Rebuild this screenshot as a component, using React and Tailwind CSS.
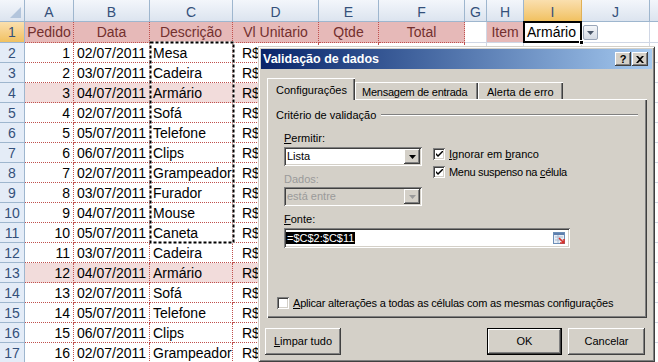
import React from 'react'

const cols = [
  { k: 'A', w: 'w-[49px]' },
  { k: 'B', w: 'w-[76px]' },
  { k: 'C', w: 'w-[83px]' },
  { k: 'D', w: 'w-[86px]' },
  { k: 'E', w: 'w-[60px]' },
  { k: 'F', w: 'w-[86px]' },
  { k: 'G', w: 'w-[22px]' },
  { k: 'H', w: 'w-[37px]' },
  { k: 'I', w: 'w-[58px]' },
  { k: 'J', w: 'w-[68px]' },
  { k: '', w: 'w-[70px]' },
]

const pedidos = [
  ['1', '02/07/2011', 'Mesa'],
  ['2', '03/07/2011', 'Cadeira'],
  ['3', '04/07/2011', 'Armário'],
  ['4', '02/07/2011', 'Sofá'],
  ['5', '05/07/2011', 'Telefone'],
  ['6', '06/07/2011', 'Clips'],
  ['7', '02/07/2011', 'Grampeador'],
  ['8', '03/07/2011', 'Furador'],
  ['9', '04/07/2011', 'Mouse'],
  ['10', '05/07/2011', 'Caneta'],
  ['11', '03/07/2011', 'Cadeira'],
  ['12', '04/07/2011', 'Armário'],
  ['13', '02/07/2011', 'Sofá'],
  ['14', '05/07/2011', 'Telefone'],
  ['15', '06/07/2011', 'Clips'],
  ['16', '02/07/2011', 'Grampeador'],
]

const red = 'shrink-0 border-r border-b border-dotted border-[#c0504d]'
const grid = 'shrink-0 border-r border-b border-[#d0d7e5]'
const headBlue = 'bg-linear-to-b from-[#f3f6fb] to-[#dce4ef]'
const headOrange = 'bg-linear-to-b from-[#fadfae] to-[#f1c15f]'

// bordas 3d do windows clássico
const raised = 'shadow-[inset_-1px_-1px_#404040,inset_1px_1px_#ffffff,inset_-2px_-2px_#808080,inset_2px_2px_#d4d0c8]'
const sunken = 'shadow-[inset_1px_1px_#808080,inset_-1px_-1px_#ffffff,inset_2px_2px_#404040,inset_-2px_-2px_#d4d0c8]'

function RowHead({ n, active }) {
  return (
    <div className={`w-[25px] shrink-0 border-r border-b border-[#9eb6ce] text-center leading-[20px] text-[#34507a] ${active ? headOrange : 'bg-[#e4ecf7]'}`}>
      {n}
    </div>
  )
}

function DataRow({ n, r }) {
  const fill = r[2] === 'Armário' ? 'bg-[#f2dcdb]' : 'bg-white'
  return (
    <div className="flex h-[20px] leading-[20px]">
      <RowHead n={n} />
      <div className={`w-[49px] ${red} ${fill} text-right pr-[3px]`}>{r[0]}</div>
      <div className={`w-[76px] ${red} ${fill} text-right pr-[3px]`}>{r[1]}</div>
      <div className={`w-[83px] ${red} ${fill} pl-[3px]`}>{r[2]}</div>
      <div className={`w-[86px] ${red} ${fill} pl-[9px]`}>R$</div>
      <div className={`w-[60px] ${red} ${fill}`} />
      <div className={`w-[86px] ${red} ${fill}`} />
      <div className={`w-[22px] ${grid}`} />
      <div className={`w-[37px] ${grid}`} />
      <div className={`w-[58px] ${grid}`} />
      <div className={`w-[68px] ${grid}`} />
      <div className={`w-[70px] ${grid}`} />
    </div>
  )
}

function DropArrow({ color = '#000000' }) {
  return (
    <svg width="7" height="4" viewBox="0 0 7 4">
      <path d="M0 0h7L3.5 4z" fill={color} />
    </svg>
  )
}

function Check({ on }) {
  return (
    <div className={`w-[12px] h-[12px] shrink-0 bg-white ${sunken} flex items-center justify-center`}>
      {on && (
        <svg width="7" height="7" viewBox="0 0 7 7">
          <path d="M0 2v2l2 2 5-5V-1L2 4z" fill="#000" />
        </svg>
      )}
    </div>
  )
}

function Button({ children, def, className = '' }) {
  return (
    <div className={`h-[27px] flex ${def ? 'border border-black' : ''} ${className}`}>
      <div className={`flex-1 bg-[#d4d0c8] ${raised} flex items-center justify-center`}>{children}</div>
    </div>
  )
}

function Dialog() {
  return (
    <div className="absolute left-[258px] top-[46px] w-[397px] h-[316px] bg-[#d4d0c8] p-[3px] shadow-[inset_1px_1px_#d4d0c8,inset_-1px_-1px_#404040,inset_2px_2px_#ffffff,inset_-2px_-2px_#808080] font-['Liberation_Sans',sans-serif] text-[11px] text-black">
      {/* barra de título */}
      <div className="h-[20px] flex items-center justify-between pl-[2px] pr-[4px] bg-linear-to-r from-[#0a246a] to-[#a6caf0]">
        <span className="text-white font-bold text-[12.5px] leading-none">Validação de dados</span>
        <div className="flex gap-[1px]">
          <div className={`w-[16px] h-[14px] bg-[#d4d0c8] ${raised} flex items-center justify-center font-bold text-[11px] leading-none`}>?</div>
          <div className={`w-[16px] h-[14px] bg-[#d4d0c8] ${raised} flex items-center justify-center`}>
            <svg width="8" height="7" viewBox="0 0 8 7">
              <path d="M0 0h2l2 2 2-2h2L5 3.5 8 7H6L4 5 2 7H0l3-3.5z" fill="#000" />
            </svg>
          </div>
        </div>
      </div>

      {/* abas */}
      <div className="flex items-end mt-[9px] ml-[6px] h-[21px]">
        <div className="relative z-10 -mb-px h-[22px] w-[88px] bg-[#d4d0c8] pl-[9px] pt-[4px] shadow-[inset_1px_1px_#ffffff,inset_-1px_0_#404040,inset_-2px_0_#808080]">
          Configurações
        </div>
        <div className="h-[17px] w-[123px] pl-[7px] pt-[2px] tracking-[-0.25px] shadow-[inset_1px_1px_#ffffff,inset_-1px_0_#404040,inset_-2px_0_#808080]">
          Mensagem de entrada
        </div>
        <div className="h-[17px] w-[85px] pl-[9px] pt-[2px] shadow-[inset_1px_1px_#ffffff,inset_-1px_0_#404040,inset_-2px_0_#808080]">
          Alerta de erro
        </div>
      </div>

      {/* painel */}
      <div className="ml-[6px] mr-[5px] h-[219px] flex flex-col pt-[9px] pl-[9px] pr-[9px] pb-[7px] shadow-[inset_1px_1px_#ffffff,inset_-1px_-1px_#404040,inset_-2px_-2px_#808080]">
        <div className="flex items-center h-[14px] leading-[14px]">
          <span>Critério de validação</span>
          <div className="flex-1 ml-[5px] border-t border-t-[#808080] border-b border-b-white" />
        </div>

        <div className="pl-[8px] mt-[9px]">
          <div className="flex">
            <div className="w-[138px]">
              <div className="h-[14px] leading-[14px]"><u>P</u>ermitir:</div>
              <div className={`mt-[2px] h-[19px] bg-white ${sunken} flex items-center p-[2px]`}>
                <span className="flex-1 pl-[1px]">Lista</span>
                <div className={`w-[16px] h-full bg-[#d4d0c8] ${raised} flex items-center justify-center`}>
                  <DropArrow />
                </div>
              </div>
              <div className="mt-[6px] h-[14px] leading-[14px] text-[#9a9a9a]">Dados:</div>
              <div className={`mt-[1px] h-[19px] bg-[#d4d0c8] ${sunken} flex items-center p-[2px]`}>
                <span className="flex-1 pl-[1px] text-[#9a9a9a]">está entre</span>
                <div className={`w-[16px] h-full bg-[#d4d0c8] ${raised} flex items-center justify-center`}>
                  <DropArrow color="#9a9a9a" />
                </div>
              </div>
            </div>
            <div className="ml-[11px] pt-[14px]">
              <div className="h-[18px] flex items-center gap-[4px]">
                <Check on />
                <span><u>I</u>gnorar em <u>b</u>ranco</span>
              </div>
              <div className="h-[18px] flex items-center gap-[4px]">
                <Check on />
                <span className="tracking-[-0.3px]">Menu suspenso na <u>c</u>élula</span>
              </div>
            </div>
          </div>
          <div className="mt-[6px] h-[14px] leading-[14px]"><u>F</u>onte:</div>
          <div className={`mt-[2px] w-[286px] h-[20px] bg-white ${sunken} flex items-center pl-[2px] pr-[4px]`}>
            <span className="flex-1">
              <span className="bg-black text-white px-px">=$C$2:$C$11</span>
            </span>
            <svg width="13" height="13" viewBox="0 0 13 13">
              <rect x="0.5" y="0.5" width="11" height="11" fill="#e8eef6" stroke="#6d8fb8" />
              <rect x="1" y="1" width="10" height="2" fill="#5d7fae" />
              <path d="M2 5h8M2 8h8M5 3v8" stroke="#a9bbd2" />
              <path d="M6 6l5 5M11 7v4H7" stroke="#d8322a" strokeWidth="1.6" fill="none" />
            </svg>
          </div>
        </div>

        <div className="mt-auto ml-[1px] h-[16px] flex items-center gap-[4px]">
          <Check />
          <span className="tracking-[-0.2px]"><u>A</u>plicar alterações a todas as células com as mesmas configurações</span>
        </div>
      </div>

      {/* botões */}
      <div className="mt-[10px] ml-[4px] mr-[7px] flex">
        <Button className="w-[76px]"><span><u>L</u>impar tudo</span></Button>
        <div className="flex-1" />
        <Button def className="w-[75px]">OK</Button>
        <Button className="w-[77px] ml-[6px]">Cancelar</Button>
      </div>
    </div>
  )
}

export default function App() {
  return (
    <div className="relative w-[658px] h-[362px] overflow-hidden bg-white font-['Liberation_Sans',sans-serif] text-[14px] text-black">
      {/* cabeçalho de colunas */}
      <div className="flex h-[22px] leading-[24px] text-[#34507a]">
        <div className={`w-[25px] shrink-0 border-r border-b border-[#9eb6ce] ${headBlue} flex items-end justify-end p-[3px]`}>
          <svg width="11" height="11" viewBox="0 0 11 11">
            <path d="M11 0v11H0z" fill="#b3c5dc" />
          </svg>
        </div>
        {cols.map((c, i) => (
          <div
            key={i}
            className={`${c.w} shrink-0 text-center border-r border-b ${c.k === 'I' ? `${headOrange} border-b-[#f29436] border-r-[#e0b056]` : `${headBlue} border-[#9eb6ce]`}`}
          >
            {c.k}
          </div>
        ))}
      </div>

      {/* linha 1 */}
      <div className="flex h-[21px] leading-[21px] text-[#73302e]">
        <RowHead n="1" active />
        <div className={`w-[49px] ${red} bg-[#e6b9b8] text-center`}>Pedido</div>
        <div className={`w-[76px] ${red} bg-[#e6b9b8] text-center`}>Data</div>
        <div className={`w-[83px] ${red} bg-[#e6b9b8] text-center`}>Descrição</div>
        <div className={`w-[86px] ${red} bg-[#e6b9b8] text-center`}>Vl Unitario</div>
        <div className={`w-[60px] ${red} bg-[#e6b9b8] text-center`}>Qtde</div>
        <div className={`w-[86px] ${red} bg-[#e6b9b8] text-center`}>Total</div>
        <div className={`w-[22px] ${grid}`} />
        <div className={`w-[37px] ${grid} bg-[#e6b9b8] text-center`}>Item</div>
        <div className={`w-[58px] ${grid} relative pl-[3px] text-black`}>
          Armário
          <span className="absolute -left-px -top-px -right-px -bottom-px border-2 border-black" />
          <span className="absolute -right-[3px] -bottom-[3px] w-[5px] h-[5px] bg-black border border-white" />
          <span className="absolute left-[59px] top-[3px] w-[15px] h-[15px] bg-linear-to-b from-[#f4f6f9] to-[#d5dbe4] border border-[#9aa6b8] rounded-[2px] flex items-center justify-center">
            <DropArrow color="#4a5668" />
          </span>
        </div>
        <div className={`w-[68px] ${grid}`} />
        <div className={`w-[70px] ${grid}`} />
      </div>

      {pedidos.map((r, i) => (
        <DataRow key={i} n={i + 2} r={r} />
      ))}

      {/* seleção copiada C2:C11 */}
      <svg className="absolute left-[149px] top-[41px]" width="87" height="204">
        <rect x="1.5" y="1.5" width="83" height="200" fill="none" stroke="#ffffff" strokeWidth="2" />
        <rect x="1.5" y="1.5" width="83" height="200" fill="none" stroke="#000000" strokeWidth="2" strokeDasharray="3 2" />
      </svg>

      <Dialog />
    </div>
  )
}
